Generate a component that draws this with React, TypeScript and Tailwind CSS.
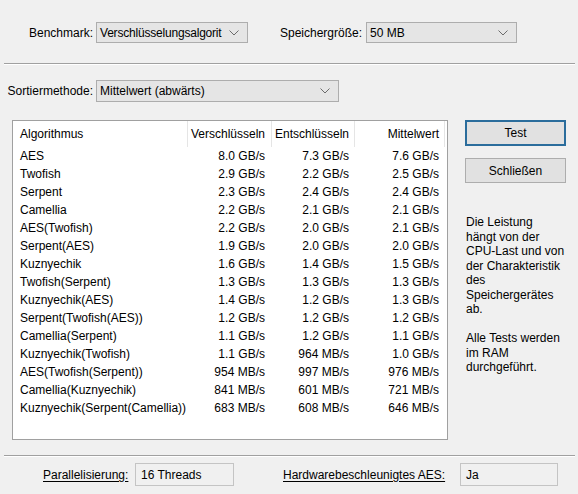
import React from 'react';

type Row = { name: string; enc: string; dec: string; mean: string };

const rows: Row[] = [
  { name: 'AES', enc: '8.0 GB/s', dec: '7.3 GB/s', mean: '7.6 GB/s' },
  { name: 'Twofish', enc: '2.9 GB/s', dec: '2.2 GB/s', mean: '2.5 GB/s' },
  { name: 'Serpent', enc: '2.3 GB/s', dec: '2.4 GB/s', mean: '2.4 GB/s' },
  { name: 'Camellia', enc: '2.2 GB/s', dec: '2.1 GB/s', mean: '2.1 GB/s' },
  { name: 'AES(Twofish)', enc: '2.2 GB/s', dec: '2.0 GB/s', mean: '2.1 GB/s' },
  { name: 'Serpent(AES)', enc: '1.9 GB/s', dec: '2.0 GB/s', mean: '2.0 GB/s' },
  { name: 'Kuznyechik', enc: '1.6 GB/s', dec: '1.4 GB/s', mean: '1.5 GB/s' },
  { name: 'Twofish(Serpent)', enc: '1.3 GB/s', dec: '1.3 GB/s', mean: '1.3 GB/s' },
  { name: 'Kuznyechik(AES)', enc: '1.4 GB/s', dec: '1.2 GB/s', mean: '1.3 GB/s' },
  { name: 'Serpent(Twofish(AES))', enc: '1.2 GB/s', dec: '1.2 GB/s', mean: '1.2 GB/s' },
  { name: 'Camellia(Serpent)', enc: '1.1 GB/s', dec: '1.2 GB/s', mean: '1.1 GB/s' },
  { name: 'Kuznyechik(Twofish)', enc: '1.1 GB/s', dec: '964 MB/s', mean: '1.0 GB/s' },
  { name: 'AES(Twofish(Serpent))', enc: '954 MB/s', dec: '997 MB/s', mean: '976 MB/s' },
  { name: 'Camellia(Kuznyechik)', enc: '841 MB/s', dec: '601 MB/s', mean: '721 MB/s' },
  { name: 'Kuznyechik(Serpent(Camellia))', enc: '683 MB/s', dec: '608 MB/s', mean: '646 MB/s' },
];

function Chevron() {
  return (
    <svg width="10" height="6" viewBox="0 0 10 6" className="shrink-0">
      <path d="M0.5 0.5 L5 5 L9.5 0.5" fill="none" stroke="#6b6b6b" strokeWidth="1" />
    </svg>
  );
}

function Combo({ value, className }: { value: string; className: string }) {
  return (
    <div
      className={`flex items-center justify-between border border-[#adadad] bg-[#e5e5e5] pl-[3px] pr-[8px] ${className}`}
    >
      <span className="whitespace-nowrap">{value}</span>
      <Chevron />
    </div>
  );
}

function Separator() {
  return (
    <div className="ml-[4px] mr-[3px]">
      <div className="h-px bg-[#a0a0a0]" />
      <div className="h-px bg-white" />
    </div>
  );
}

function ReadOnly({ value, className }: { value: string; className: string }) {
  return (
    <div
      className={`flex items-center h-[23px] border border-[#c4c4c4] bg-[#f0f0f0] pl-[5px] ${className}`}
    >
      {value}
    </div>
  );
}

export default function App() {
  return (
    <div
      className="w-[578px] h-[494px] bg-[#f0f0f0] text-black text-[12px] overflow-hidden"
      style={{ fontFamily: '"Liberation Sans", Arial, sans-serif' }}
    >
      {/* benchmark + buffer size */}
      <div className="flex items-center pt-[22px] h-[43px]">
        <div className="w-[93px] text-right">Benchmark:</div>
        <Combo
          value="Verschlüsselungsalgorit"
          className="ml-[3px] w-[152px] h-[21px] tracking-[-0.2px]"
        />
        <div className="ml-[32px] w-[86px]">Speichergröße:</div>
        <Combo value="50 MB" className="w-[151px] h-[21px]" />
      </div>

      <div className="mt-[20px]">
        <Separator />
      </div>

      {/* sort order */}
      <div className="flex items-center mt-[15px]">
        <div className="w-[93px] text-right">Sortiermethode:</div>
        <Combo value="Mittelwert (abwärts)" className="ml-[3px] w-[243px] h-[22px]" />
      </div>

      <div className="flex mt-[18px]">
        {/* result list */}
        <div className="ml-[12px] w-[436px] h-[320px] border border-[#a0a0a0] bg-white">
          <div className="flex h-[26px] items-center">
            <div className="w-[175px] pl-[7px] h-full flex items-center border-r border-[#e5e5e5]">Algorithmus</div>
            <div className="w-[84px] pr-[6px] h-full flex items-center justify-end border-r border-[#e5e5e5]">Verschlüsseln</div>
            <div className="w-[83px] pr-[5px] h-full flex items-center justify-end border-r border-[#e5e5e5]">Entschlüsseln</div>
            <div className="w-[90px] pr-[5px] h-full flex items-center justify-end border-r border-[#e5e5e5]">Mittelwert</div>
          </div>
          {rows.map((r) => (
            <div key={r.name} className="flex h-[18px] items-center">
              <div className="w-[175px] pl-[7px] whitespace-nowrap">{r.name}</div>
              <div className="w-[84px] pr-[7px] text-right whitespace-nowrap">{r.enc}</div>
              <div className="w-[83px] pr-[6px] text-right whitespace-nowrap">{r.dec}</div>
              <div className="w-[90px] pr-[6px] text-right whitespace-nowrap">{r.mean}</div>
            </div>
          ))}
        </div>

        {/* buttons + notes */}
        <div className="ml-[17px] w-[101px] flex flex-col">
          <button className="h-[26px] border-2 border-[#2b6d9c] bg-[#e1e1e1] flex items-center justify-center">
            Test
          </button>
          <button className="mt-[12px] h-[25px] border border-[#adadad] bg-[#e1e1e1] flex items-center justify-center">
            Schließen
          </button>
          <div className="mt-[32px] pl-[1px] leading-[14.5px] whitespace-nowrap">
            Die Leistung<br />
            hängt von der<br />
            CPU-Last und von<br />
            der Charakteristik<br />
            des<br />
            Speichergerätes<br />
            ab.<br />
            <br />
            Alle Tests werden<br />
            im RAM<br />
            durchgeführt.
          </div>
        </div>
      </div>

      <div className="mt-[15px]">
        <Separator />
      </div>

      {/* footer info */}
      <div className="flex items-center mt-[6px]">
        <span className="ml-[43px] w-[92px] underline underline-offset-2">Parallelisierung:</span>
        <ReadOnly value="16 Threads" className="w-[99px]" />
        <span className="ml-[49px] w-[177px] underline underline-offset-2">Hardwarebeschleunigtes AES:</span>
        <ReadOnly value="Ja" className="w-[98px]" />
      </div>
    </div>
  );
}
